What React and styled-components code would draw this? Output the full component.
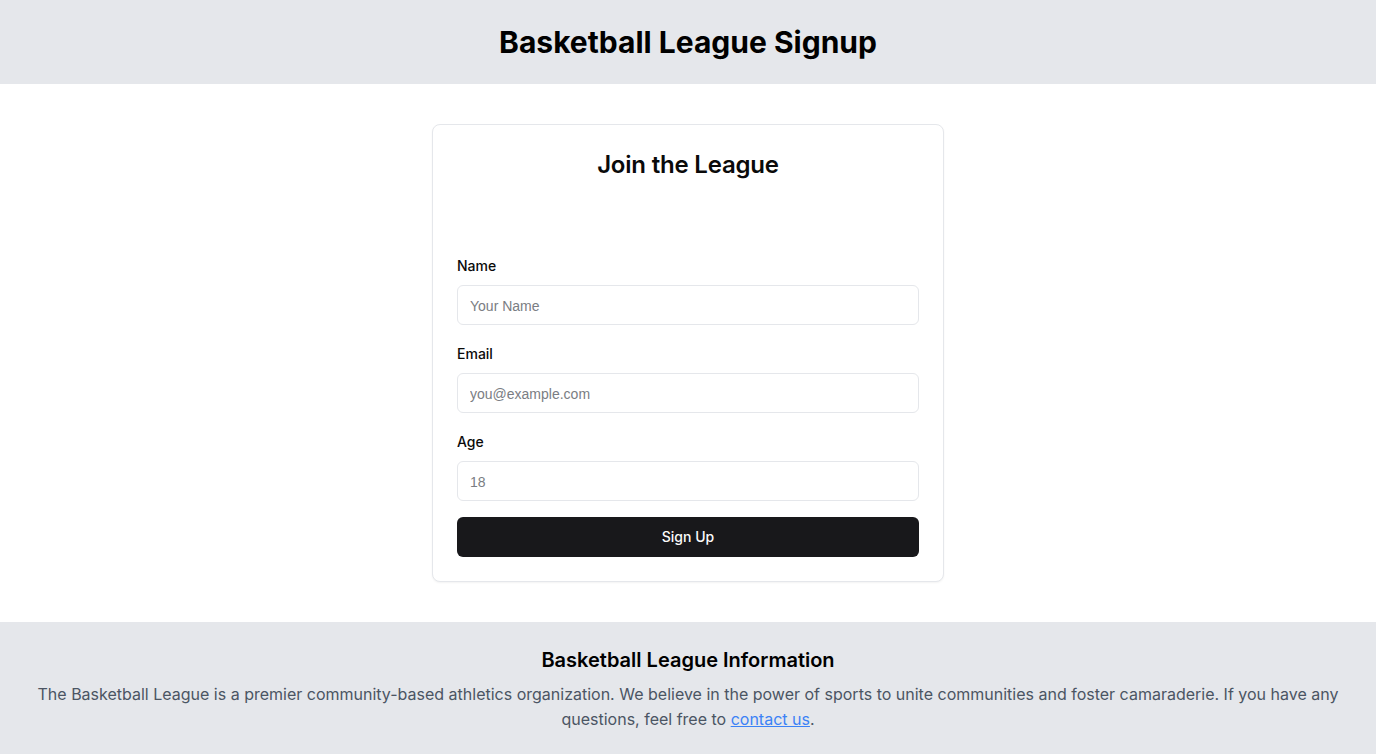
import React from 'react'
import styled, { createGlobalStyle } from 'styled-components'

const GlobalStyle = createGlobalStyle`
  * { box-sizing: border-box; }
  body {
    margin: 0;
    font-family: Inter, "Noto Sans", sans-serif;
    background: #ffffff;
    color: #0a0a0a;
  }
`

const Page = styled.div`
  display: flex;
  flex-direction: column;
  min-height: 100vh;
`

const Header = styled.header`
  background: #e5e7eb;
  padding: 24px;
  text-align: center;
`

const Title = styled.h1`
  margin: 0;
  font-size: 30px;
  line-height: 36px;
  font-weight: 700;
  color: #000;
`

const Main = styled.main`
  flex: 1;
  display: flex;
  justify-content: center;
  padding: 40px 24px;
`

const Card = styled.section`
  width: 512px;
  border: 1px solid #e5e7eb;
  border-radius: 8px;
  background: #fff;
  box-shadow: 0 1px 2px rgba(0, 0, 0, 0.05);
  padding: 24px;
`

const CardTitle = styled.h2`
  margin: 0 0 74px;
  font-size: 24px;
  line-height: 32px;
  font-weight: 600;
  text-align: center;
  letter-spacing: -0.2px;
`

const Form = styled.form`
  display: flex;
  flex-direction: column;
`

const Fields = styled.div`
  display: flex;
  flex-direction: column;
  gap: 18px;
`

const Field = styled.div`
  display: flex;
  flex-direction: column;
`

const Label = styled.label`
  font-size: 14px;
  line-height: 20px;
  font-weight: 500;
  padding-top: 1px;
  margin-bottom: 9px;
  color: #0a0a0a;
`

const Input = styled.input`
  height: 40px;
  width: 100%;
  border: 1px solid #e5e7eb;
  border-radius: 6px;
  padding: 1px 12px 0;
  font-family: "Liberation Sans", Arial, sans-serif;
  font-size: 14px;
  color: #0a0a0a;
  background: #fff;
  outline: none;

  &::placeholder {
    color: #7a7d83;
  }
`

const Button = styled.button`
  margin-top: 16px;
  height: 40px;
  border: none;
  border-radius: 6px;
  padding: 0 0 2px;
  background: #18181b;
  color: #fafafa;
  font-family: Inter, sans-serif;
  font-size: 14px;
  font-weight: 500;
  cursor: pointer;
`

const Footer = styled.footer`
  background: #e5e7eb;
  padding: 24px;
  text-align: center;
`

const FooterTitle = styled.h3`
  margin: 0 0 8px;
  font-size: 20px;
  line-height: 28px;
  font-weight: 600;
  color: #000;
`

const FooterText = styled.p`
  margin: 0;
  font-size: 16px;
  line-height: 25px;
  color: #4b5563;
`

const Link = styled.a`
  color: #3b82f6;
  text-decoration: underline;
`

export default function App() {
  return (
    <Page>
      <GlobalStyle />
      <Header>
        <Title>Basketball League Signup</Title>
      </Header>
      <Main>
        <Card>
          <CardTitle>Join the League</CardTitle>
          <Form onSubmit={e => e.preventDefault()}>
            <Fields>
              <Field>
                <Label htmlFor="name">Name</Label>
                <Input id="name" placeholder="Your Name" />
              </Field>
              <Field>
                <Label htmlFor="email">Email</Label>
                <Input id="email" type="email" placeholder="you@example.com" />
              </Field>
              <Field>
                <Label htmlFor="age">Age</Label>
                <Input id="age" type="number" placeholder="18" />
              </Field>
            </Fields>
            <Button type="submit">Sign Up</Button>
          </Form>
        </Card>
      </Main>
      <Footer>
        <FooterTitle>Basketball League Information</FooterTitle>
        <FooterText>
          The Basketball League is a premier community-based athletics organization. We believe in the power of sports to unite communities and foster camaraderie. If you have any questions, feel free to <Link href="#">contact us</Link>.
        </FooterText>
      </Footer>
    </Page>
  )
}
